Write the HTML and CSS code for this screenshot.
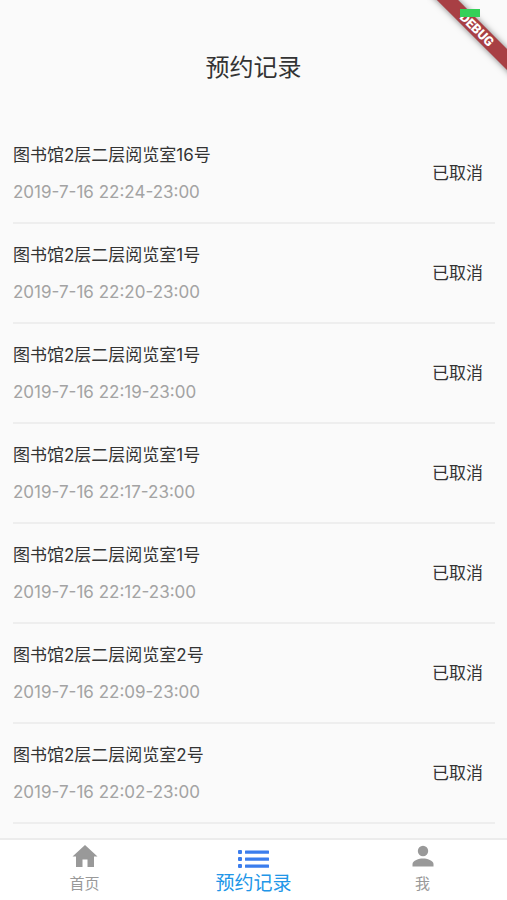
FILE: index.html
```html
<!DOCTYPE html>
<html lang="zh-CN">
<head>
  <meta charset="UTF-8">
  <meta name="viewport" content="width=device-width, initial-scale=1.0">
  <title>预约记录</title>
  <link rel="stylesheet" href="styles.css">
</head>
<body>
  <div class="debug-corner">
    <div class="debug-banner">DEBUG</div>
    <div class="battery"></div>
  </div>

  <header class="header">
    <h1>预约记录</h1>
  </header>

  <main class="content">
    <ul class="records">
      <li class="record">
        <div class="info">
          <p class="seat">图书馆2层二层阅览室16号</p>
          <p class="time">2019-7-16 22:24-23:00</p>
        </div>
        <span class="status">已取消</span>
      </li>
      <li class="record">
        <div class="info">
          <p class="seat">图书馆2层二层阅览室1号</p>
          <p class="time">2019-7-16 22:20-23:00</p>
        </div>
        <span class="status">已取消</span>
      </li>
      <li class="record">
        <div class="info">
          <p class="seat">图书馆2层二层阅览室1号</p>
          <p class="time">2019-7-16 22:19-23:00</p>
        </div>
        <span class="status">已取消</span>
      </li>
      <li class="record">
        <div class="info">
          <p class="seat">图书馆2层二层阅览室1号</p>
          <p class="time">2019-7-16 22:17-23:00</p>
        </div>
        <span class="status">已取消</span>
      </li>
      <li class="record">
        <div class="info">
          <p class="seat">图书馆2层二层阅览室1号</p>
          <p class="time">2019-7-16 22:12-23:00</p>
        </div>
        <span class="status">已取消</span>
      </li>
      <li class="record">
        <div class="info">
          <p class="seat">图书馆2层二层阅览室2号</p>
          <p class="time">2019-7-16 22:09-23:00</p>
        </div>
        <span class="status">已取消</span>
      </li>
      <li class="record">
        <div class="info">
          <p class="seat">图书馆2层二层阅览室2号</p>
          <p class="time">2019-7-16 22:02-23:00</p>
        </div>
        <span class="status">已取消</span>
      </li>
    </ul>
  </main>

  <nav class="tabbar">
    <a href="#home" class="tab">
      <svg class="icon" viewBox="0 0 32 26" fill="currentColor">
        <path d="M16 1 L28.5 12.5 H25 V23 H18.5 V15.500 H13.5 V23 H7 V12.5 H3.5 Z"/>
      </svg>
      <span>首页</span>
    </a>
    <a href="#records" class="tab active">
      <svg class="icon" viewBox="0 0 32 26" fill="currentColor">
        <rect x="0" y="6" width="4" height="4" rx="1"/>
        <rect x="0" y="13" width="4" height="4" rx="1"/>
        <rect x="0" y="20" width="4" height="4" rx="1"/>
        <rect x="7" y="6.5" width="24" height="3.2" rx="0.5"/>
        <rect x="7" y="13.5" width="24" height="3.2" rx="0.5"/>
        <rect x="7" y="20.5" width="24" height="3.2" rx="0.5"/>
      </svg>
      <span>预约记录</span>
    </a>
    <a href="#me" class="tab">
      <svg class="icon" viewBox="0 0 32 26" fill="currentColor">
        <circle cx="16" cy="7" r="5.2"/>
        <path d="M5.5 22.5 V20 C5.5 16.5 12 14.5 16 14.5 S26.5 16.5 26.5 20 V22.5 Z"/>
      </svg>
      <span>我</span>
    </a>
  </nav>
</body>
</html>
```

FILE: styles.css
```css
* {
  box-sizing: border-box;
}
body {
  margin: 0;
  height: 100vh;
  display: flex;
  flex-direction: column;
  position: relative;
  background-color: #fafafa;
  color: #333;
  font-family: Inter, "Noto Sans CJK SC", sans-serif;
  font-size: 17px;
  line-height: 24px;
}
h1, p, ul {
  margin: 0;
  padding: 0;
}

/* header */
.header {
  padding: 52px 16px 40px;
  text-align: center;
}
.header h1 {
  font-size: 24px;
  font-weight: 400;
  line-height: 32px;
}

/* records */
.content {
  flex: 1;
  min-height: 0;
  overflow: hidden auto;
  padding: 0 12px 0 13px;
}
.records {
  list-style: none;
}
.record {
  display: flex;
  justify-content: space-between;
  align-items: center;
  height: 100px;
  padding-right: 12px;
  border-bottom: 2px solid #eee;
}
.info {
  display: flex;
  flex-direction: column;
  gap: 13px;
}
.time {
  color: #a3a3a3;
}

/* bottom tabs */
.tabbar {
  display: flex;
  height: 62px;
  background-color: #fff;
  border-top: 2px solid #ececec;
}
.tab {
  flex: 1;
  display: flex;
  flex-direction: column;
  align-items: center;
  gap: 2px;
  padding-top: 4px;
  color: #999;
  font-size: 15px;
  text-decoration: none;
}
.icon {
  width: 32px;
  height: 26px;
}
.tab.active {
  color: #2196e8;
  font-size: 19px;
}
.active .icon {
  color: #3b7ded;
}

/* debug ribbon */
.debug-corner {
  position: absolute;
  top: 0;
  right: 0;
  width: 80px;
  height: 80px;
  overflow: hidden;
}
.debug-banner {
  position: absolute;
  top: 22px;
  left: -20px;
  width: 140px;
  height: 15px;
  background-color: #a83f44;
  box-shadow: 0 0 6px rgba(0, 0, 0, 0.5);
  color: #fff;
  font-family: Roboto, sans-serif;
  font-size: 13px;
  font-weight: 900;
  line-height: 15px;
  text-align: center;
  transform: rotate(45deg);
}
.battery {
  position: absolute;
  top: 9px;
  left: 33px;
  width: 20px;
  height: 8px;
  background-color: #35d058;
}
```
